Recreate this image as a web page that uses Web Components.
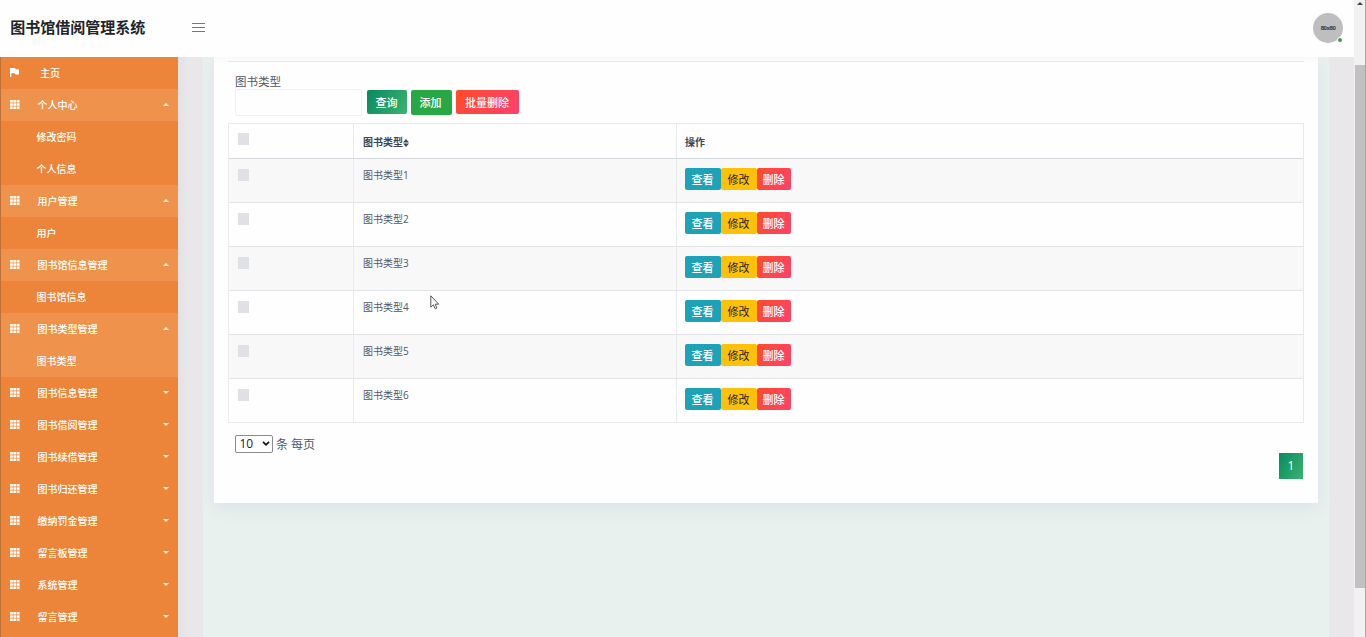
<!DOCTYPE html>
<html lang="zh-CN">
<head>
<meta charset="UTF-8">
<title>图书馆借阅管理系统</title>
<style>
    html, body {
        margin: 0;
        height: 637px;
        overflow: hidden;
        font-family: "Open Sans", "Noto Sans CJK SC", sans-serif;
        color: #505866;
    }
</style>
</head>
<body>
<library-app></library-app>

<script>
const MENU = [
    { name: '主页', icon: 'flag' },
    { name: '个人中心', open: true, items: ['修改密码', '个人信息'] },
    { name: '用户管理', open: true, items: ['用户'] },
    { name: '图书馆信息管理', open: true, items: ['图书馆信息'] },
    { name: '图书类型管理', open: true, active: true, items: ['图书类型'] },
    { name: '图书信息管理' },
    { name: '图书借阅管理' },
    { name: '图书续借管理' },
    { name: '图书归还管理' },
    { name: '缴纳罚金管理' },
    { name: '留言板管理' },
    { name: '系统管理' },
    { name: '留言管理' }
]

class AppHeader extends HTMLElement {
    constructor() {
        super();
        this.attachShadow({ mode: 'open' })
    }

    connectedCallback() {
        this.shadowRoot.innerHTML = `
            <style>
                :host {
                    display: flex;
                    align-items: center;
                    height: 57px;
                    box-sizing: border-box;
                    padding: 0 11px 0 10.2px;
                    background-color: #fefefe;
                }
                .title {
                    width: 181.8px;
                    font-size: 15px;
                    line-height: 20px;
                    font-weight: 700;
                    color: #212529;
                    padding-bottom: 4px;
                }
                .burger {
                    display: block;
                    flex: none;
                    margin-bottom: 2px;
                }
                .avatar {
                    position: relative;
                    margin-left: auto;
                    margin-bottom: 1px;
                    width: 30px;
                    height: 30px;
                    border-radius: 50%;
                    background-color: #bebebe;
                    color: #333;
                    font: 700 6px/30px "Liberation Sans", sans-serif;
                    letter-spacing: -0.4px;
                    text-align: center;
                }
                .avatar::after {
                    content: '';
                    position: absolute;
                    right: 0;
                    bottom: 0;
                    width: 4px;
                    height: 4px;
                    border: 1.5px solid white;
                    border-radius: 50%;
                    background-color: #459a4c;
                }
            </style>
            <div class="title"><slot></slot></div>
            <svg class="burger" width="13" height="9" viewBox="0 0 13 9"><path d="M0 .5h13M0 4.5h13M0 8.5h13" stroke="#777" stroke-width="1.2"/></svg>
            <div class="avatar">80x80</div>
        `
    }
}

class MenuGroup extends HTMLElement {
    constructor() {
        super();
        this.attachShadow({ mode: 'open' })
    }

    get icon() {
        if (this.getAttribute('icon') == 'flag') {
            return '<path d="M0 0h5l.7 1.3H9v5.2H5.4l-.7-1.2H1.3V9H0z"/>'
        }
        return '<path d="M0 0h2.8v2.5H0zM3.4 0h2.8v2.5H3.4zM6.8 0h2.8v2.5H6.8zM0 3.2h2.8v2.5H0zM3.4 3.2h2.8v2.5H3.4zM6.8 3.2h2.8v2.5H6.8zM0 6.4h2.8v2.5H0zM3.4 6.4h2.8v2.5H3.4zM6.8 6.4h2.8v2.5H6.8z"/>'
    }

    connectedCallback() {
        const home = this.getAttribute('icon') == 'flag'
        const arrow = this.hasAttribute('open') ? 'M0 2.5L2.5 0 5 2.5z' : 'M0 0h5L2.5 2.5z'
        this.shadowRoot.innerHTML = `
            <style>
                :host {
                    display: block;
                    color: white;
                }
                :host([active]) {
                    background-color: #ef924b;
                }
                .head {
                    display: flex;
                    align-items: center;
                    height: 32px;
                    box-sizing: border-box;
                    padding: 0 10px;
                    font-size: 10px;
                    font-weight: 500;
                }
                :host([open]) .head {
                    background-color: #ef924b;
                }
                .icon {
                    width: 10px;
                    height: 9px;
                    margin-bottom: 1px;
                    fill: white;
                }
                .name {
                    flex: 1;
                    line-height: 16px;
                    padding-left: ${home ? 20 : 17.5}px;
                }
                .arrow {
                    width: 6px;
                    height: 3px;
                    margin: 0 -1px 2px 0;
                    fill: #fff3e6;
                }
            </style>
            <div class="head">
                <svg class="icon" viewBox="0 0 10 9">${this.icon}</svg>
                <div class="name">${this.getAttribute('name')}</div>
                ${home ? '' : `<svg class="arrow" viewBox="0 0 5 2.5"><path d="${arrow}"/></svg>`}
            </div>
            <slot></slot>
        `
    }
}

class MenuLink extends HTMLElement {
    constructor() {
        super();
        this.attachShadow({ mode: 'open' }).innerHTML = `
            <style>
                :host {
                    display: block;
                    height: 32px;
                    box-sizing: border-box;
                    padding-left: 36.4px;
                    font-size: 10px;
                    font-weight: 500;
                    line-height: 32px;
                    color: white;
                }
            </style>
            <slot></slot>
        `
    }
}

class SideMenu extends HTMLElement {
    constructor() {
        super();
        this.attachShadow({ mode: 'open' })
    }

    connectedCallback() {
        this.shadowRoot.innerHTML = `
            <style>
                :host {
                    display: block;
                    width: 178px;
                    box-sizing: border-box;
                    background-color: #ec853a;
                    border-left: 1px solid #bd7239;
                    overflow: hidden;
                }
                menu-group {
                    margin-left: -1px;
                    box-shadow: inset 1px 0 #bd7239;
                }
            </style>
            ${MENU.map(m => `
                <menu-group name="${m.name}" icon="${m.icon || 'grid'}" ${m.open ? 'open' : ''} ${m.active ? 'active' : ''}>
                    ${(m.items || []).map(i => `<menu-link>${i}</menu-link>`).join('')}
                </menu-group>
            `).join('')}
        `
    }
}

class AppButton extends HTMLElement {
    constructor() {
        super();
        this.attachShadow({ mode: 'open' }).innerHTML = `
            <style>
                :host {
                    display: flex;
                    align-items: center;
                    justify-content: center;
                    height: 24px;
                    box-sizing: border-box;
                    padding: 1px 1px 0 0;
                    border-radius: 2px;
                    font-size: 11px;
                    font-weight: 500;
                    line-height: 16px;
                    color: white;
                }
                :host([small]) {
                    height: 22px;
                    padding-top: 2px;
                }
                :host([kind=search]) {
                    background: linear-gradient(120deg, #068a60, #3bb371);
                }
                :host([kind=add]) {
                    height: 25px;
                    background: #28a745;
                }
                :host([kind=view]) {
                    background: #1ea2b8;
                }
                :host([kind=edit]) {
                    background: #ffc107;
                    color: #212529;
                    font-weight: 400;
                }
                :host([kind=delete]) {
                    background: linear-gradient(120deg, #ff4b2b, #ff416c);
                }
            </style>
            <slot></slot>
        `
    }
}

class TypeTable extends HTMLElement {
    constructor() {
        super();
        this.attachShadow({ mode: 'open' })
    }

    connectedCallback() {
        const rows = this.getAttribute('rows').split(',')
        this.shadowRoot.innerHTML = `
            <style>
                :host {
                    display: block;
                    width: 1076px;
                    box-sizing: border-box;
                    border: 1px solid #e7e9eb;
                    font-size: 10px;
                }
                .row {
                    display: grid;
                    grid-template-columns: 125px 323px 1fr;
                    height: 44px;
                    box-sizing: border-box;
                    border-bottom: 1px solid #e2e4e7;
                }
                .row:last-child {
                    height: 43px;
                    border-bottom: none;
                }
                .row.odd {
                    background-color: #f8f8f9;
                }
                .row > div {
                    box-sizing: border-box;
                    padding: 9px 8px 0 9px;
                    border-right: 1px solid #e7e9eb;
                    line-height: 15px;
                }
                .row > div:last-child {
                    padding-left: 8px;
                    border-right: none;
                }
                .head {
                    height: 35px;
                    border-bottom: 1px solid #d5d8dc;
                    font-weight: 700;
                    color: #3d4654;
                }
                .head > div:nth-child(n) {
                    padding-top: 11px;
                }
                .row > .check {
                    padding: 10px 9px;
                }
                .head > .check:nth-child(n) {
                    padding-top: 9px;
                }
                .box {
                    width: 11px;
                    height: 12px;
                    background-color: #dfe1e7;
                }
                .actions {
                    display: flex;
                }
                .actions app-button {
                    width: 36px;
                }
                .actions app-button:last-child {
                    width: 34px;
                }
                .sort {
                    width: 6px;
                    height: 8px;
                    margin-bottom: -1px;
                    fill: #3d4654;
                }
            </style>
            <div class="row head">
                <div class="check"><div class="box"></div></div>
                <div>图书类型<svg class="sort" viewBox="0 0 6 8"><path d="M0 3.4L3 0l3 3.4zM0 4.6h6L3 8z"/></svg></div>
                <div>操作</div>
            </div>
            ${rows.map((r, i) => `
                <div class="row ${i % 2 == 0 ? 'odd' : ''}">
                    <div class="check"><div class="box"></div></div>
                    <div>${r}</div>
                    <div class="actions">
                        <app-button small kind="view">查看</app-button>
                        <app-button small kind="edit">修改</app-button>
                        <app-button small kind="delete">删除</app-button>
                    </div>
                </div>
            `).join('')}
        `
    }
}

class TypePanel extends HTMLElement {
    constructor() {
        super();
        this.attachShadow({ mode: 'open' }).innerHTML = `
            <style>
                :host {
                    display: block;
                    height: 446px;
                    box-sizing: border-box;
                    padding: 4px 14px 0;
                    background: linear-gradient(#f8f9fb, #fefefe 8px);
                    box-shadow: 0 5px 15px #dbe3ea;
                }
                .line {
                    height: 1px;
                    background-color: #e6e7ea;
                }
                .label {
                    height: 27px;
                    box-sizing: border-box;
                    padding: 12px 0 0 7px;
                    font-size: 11.5px;
                    line-height: 16px;
                }
                .search {
                    display: flex;
                    align-items: flex-start;
                    height: 34px;
                    padding-left: 7px;
                }
                .input {
                    width: 127px;
                    height: 27px;
                    box-sizing: border-box;
                    border: 1px solid #eef0f2;
                    border-radius: 2px;
                    margin-right: 5px;
                }
                .search app-button {
                    margin-top: 1px;
                    margin-right: 4px;
                    width: 40px;
                }
                .search app-button[kind=add] {
                    width: 41px;
                    margin-left: -0.5px;
                    margin-right: 4.5px;
                }
                .search app-button[kind=delete] {
                    width: 63px;
                }
                .length {
                    display: flex;
                    align-items: center;
                    gap: 3px;
                    padding: 11px 0 0 7px;
                    height: 19px;
                    font-size: 12px;
                }
                .select {
                    display: flex;
                    align-items: center;
                    justify-content: space-between;
                    width: 38px;
                    height: 18px;
                    box-sizing: border-box;
                    padding: 0 2px 0 3.5px;
                    border: 1px solid #8b8b8b;
                    border-radius: 2px;
                    color: #222;
                }
                .page {
                    width: 24px;
                    height: 26px;
                    margin: 0 1px 0 auto;
                    background: linear-gradient(120deg, #078b60, #3bb371);
                    color: white;
                    font-size: 12px;
                    line-height: 26px;
                    text-align: center;
                }
            </style>
            <div class="line"></div>
            <div class="label">图书类型</div>
            <div class="search">
                <div class="input"></div>
                <app-button kind="search">查询</app-button>
                <app-button kind="add">添加</app-button>
                <app-button kind="delete">批量删除</app-button>
            </div>
            <slot></slot>
            <div class="length">
                <div class="select">10<svg width="8" height="5" viewBox="0 0 8 5"><path d="M1 .8l3 3 3-3" fill="none" stroke="#111" stroke-width="1.7"/></svg></div>
                <span>条 每页</span>
            </div>
            <div class="page">1</div>
        `
    }
}

class PageScroll extends HTMLElement {
    constructor() {
        super();
        this.attachShadow({ mode: 'open' }).innerHTML = `
            <style>
                :host {
                    display: block;
                    width: 12px;
                    box-sizing: border-box;
                    background-color: #f1f1f1;
                    border-right: 1px solid #a5a5a5;
                }
                .up {
                    display: block;
                    margin: 2px 0 0 3px;
                }
                .thumb {
                    height: 523px;
                    margin: 60px 0 0 1px;
                    background-color: #c1c1c1;
                }
            </style>
            <svg class="up" width="6" height="3" viewBox="0 0 6 3"><path d="M0 3L3 0l3 3z" fill="#444"/></svg>
            <div class="thumb"></div>
        `
    }
}

class LibraryApp extends HTMLElement {
    constructor() {
        super();
        this.attachShadow({ mode: 'open' }).innerHTML = `
            <style>
                :host {
                    display: grid;
                    grid-template-columns: 1fr 12px;
                    width: 1366px;
                    height: 637px;
                }
                .app {
                    display: grid;
                    grid-template-rows: 57px 580px;
                    min-width: 0;
                }
                .body {
                    display: flex;
                    overflow: hidden;
                }
                .edge {
                    width: 25px;
                    background-color: #e9e7ea;
                }
                .edge.left {
                    background: linear-gradient(90deg, #e0e2e6, #e9e7ea 10px);
                }
                main {
                    flex: 1;
                    box-sizing: border-box;
                    padding: 0 11px;
                    background-color: #e8f1ed;
                    overflow: hidden;
                }
                .cursor {
                    position: absolute;
                    left: 430px;
                    top: 295px;
                }
            </style>
            <div class="app">
                <app-header>图书馆借阅管理系统</app-header>
                <div class="body">
                    <side-menu></side-menu>
                    <div class="edge left"></div>
                    <main>
                        <type-panel>
                            <type-table rows="图书类型1,图书类型2,图书类型3,图书类型4,图书类型5,图书类型6"></type-table>
                        </type-panel>
                    </main>
                    <div class="edge"></div>
                </div>
            </div>
            <page-scroll></page-scroll>
            <svg class="cursor" width="10" height="15" viewBox="0 0 10 15"><path d="M.8.8v11.4l2.6-2.4 1.8 4 1.7-.8-1.7-3.8h3.5z" fill="white" stroke="#444" stroke-width=".9"/></svg>
        `
    }
}

customElements.define('app-header', AppHeader);
customElements.define('menu-group', MenuGroup);
customElements.define('menu-link', MenuLink);
customElements.define('side-menu', SideMenu);
customElements.define('app-button', AppButton);
customElements.define('type-table', TypeTable);
customElements.define('type-panel', TypePanel);
customElements.define('page-scroll', PageScroll);
customElements.define('library-app', LibraryApp);
</script>
</body>
</html>
